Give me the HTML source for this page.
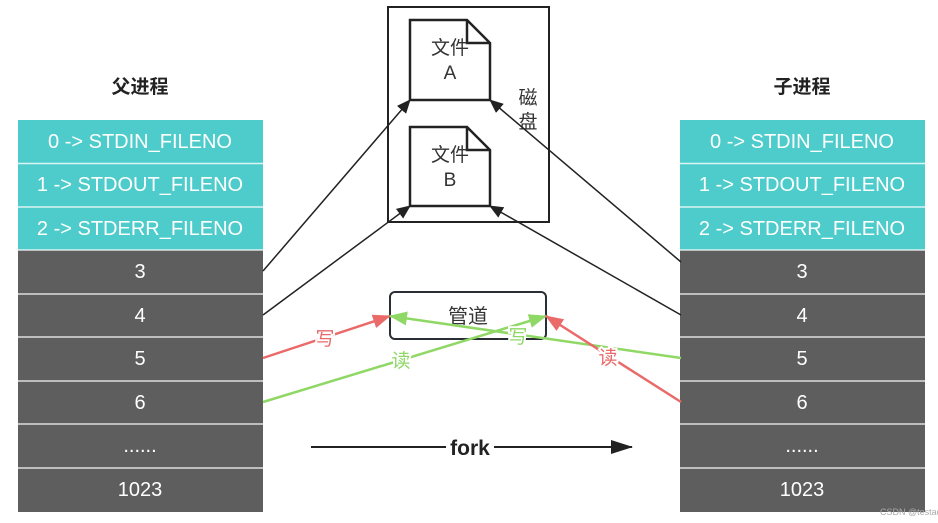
<!DOCTYPE html>
<html><head><meta charset="utf-8"><style>
body{margin:0;width:938px;height:518px;background:#fff;overflow:hidden}
svg text{font-family:"Liberation Sans","Noto Sans CJK SC",sans-serif}
</style></head><body>
<svg width="938" height="518" xmlns="http://www.w3.org/2000/svg">
<defs>
<marker id="ak" markerWidth="14" markerHeight="12" refX="13" refY="6" orient="auto" markerUnits="userSpaceOnUse"><path d="M0,0L14,6L0,12z" fill="#222"/></marker>
<marker id="ar" markerWidth="18" markerHeight="14" refX="17" refY="7" orient="auto" markerUnits="userSpaceOnUse"><path d="M0,0L18,7L0,14z" fill="#ea6a6a"/></marker>
<marker id="ag" markerWidth="18" markerHeight="14" refX="17" refY="7" orient="auto" markerUnits="userSpaceOnUse"><path d="M0,0L18,7L0,14z" fill="#8fd865"/></marker>
<marker id="af" markerWidth="22" markerHeight="14" refX="21" refY="7" orient="auto" markerUnits="userSpaceOnUse"><path d="M0,0L22,7L0,14z" fill="#222"/></marker>
</defs>
<text x="140" y="93" font-size="19" font-weight="bold" text-anchor="middle" fill="#222">父进程</text>
<text x="802" y="93" font-size="19" font-weight="bold" text-anchor="middle" fill="#222">子进程</text>
<g font-size="20" text-anchor="middle">
<g id="tbl">
<rect x="18" y="120" width="245" height="130" fill="#4ecbcb"/>
<rect x="18" y="250" width="245" height="262" fill="#5e5e5e"/>
<g stroke="#fff" stroke-width="1.5" opacity="0.8"><line x1="18" x2="263" y1="163.5" y2="163.5"/><line x1="18" x2="263" y1="207" y2="207"/><line x1="18" x2="263" y1="250" y2="250"/><line x1="18" x2="263" y1="294" y2="294"/><line x1="18" x2="263" y1="337" y2="337"/><line x1="18" x2="263" y1="381" y2="381"/><line x1="18" x2="263" y1="424" y2="424"/><line x1="18" x2="263" y1="468" y2="468"/></g>
<g fill="#fff"><text x="140" y="148">0 -&gt; STDIN_FILENO</text><text x="140" y="191">1 -&gt; STDOUT_FILENO</text><text x="140" y="235">2 -&gt; STDERR_FILENO</text><text x="140" y="278">3</text><text x="140" y="322">4</text><text x="140" y="365">5</text><text x="140" y="409">6</text><text x="140" y="452">......</text><text x="140" y="496">1023</text></g>
</g>
<use href="#tbl" x="662"/>
</g>
<rect x="388" y="7" width="161" height="215" fill="none" stroke="#222" stroke-width="2"/>
<path d="M410,20H467L490,43V100H410Z M467,20V43H490" fill="#fff" stroke="#222" stroke-width="2.5"/>
<path d="M410,127H467L490,150V206H410Z M467,127V150H490" fill="#fff" stroke="#222" stroke-width="2.5"/>
<g font-size="19" fill="#333" text-anchor="middle"><text x="450" y="54">文件</text><text x="450" y="79">A</text><text x="450" y="161">文件</text><text x="450" y="186">B</text><text x="528" y="104">磁</text><text x="528" y="128">盘</text></g>
<rect x="390" y="292" width="156" height="47" rx="5" fill="#fff" stroke="#2a2f35" stroke-width="2"/>
<text x="468" y="323" font-size="20" fill="#333" text-anchor="middle">管道</text>
<g stroke="#222" stroke-width="1.5" fill="none">
<line x1="263" y1="271" x2="410" y2="100" marker-end="url(#ak)"/>
<line x1="263" y1="315" x2="410" y2="206" marker-end="url(#ak)"/>
<line x1="681" y1="262" x2="490" y2="100" marker-end="url(#ak)"/>
<line x1="681" y1="315" x2="490" y2="206" marker-end="url(#ak)"/>
</g>
<g stroke-width="2.5" fill="none">
<line x1="263" y1="358" x2="390" y2="316" stroke="#ea6a6a" marker-end="url(#ar)"/>
<line x1="263" y1="402" x2="546" y2="316" stroke="#8fd865" marker-end="url(#ag)"/>
<line x1="681" y1="358" x2="390" y2="316" stroke="#8fd865" marker-end="url(#ag)"/>
<line x1="681" y1="402" x2="546" y2="316" stroke="#ea6a6a" marker-end="url(#ar)"/>
</g>
<g font-size="19" text-anchor="middle" stroke="#fff" stroke-width="4" paint-order="stroke">
<text x="325" y="345" fill="#ea6a6a">写</text>
<text x="401" y="367" fill="#8fd865">读</text>
<text x="518" y="343" fill="#8fd865">写</text>
<text x="608" y="364" fill="#ea6a6a">读</text>
</g>
<line x1="311" y1="447" x2="632" y2="447" stroke="#222" stroke-width="2" marker-end="url(#af)"/>
<rect x="446" y="434" width="48" height="26" fill="#fff"/>
<text x="470" y="455" font-size="21" font-weight="bold" fill="#222" text-anchor="middle">fork</text>
<text x="880" y="515" font-size="9" fill="#aaa">CSDN @testaccount</text>
</svg>
</body></html>
